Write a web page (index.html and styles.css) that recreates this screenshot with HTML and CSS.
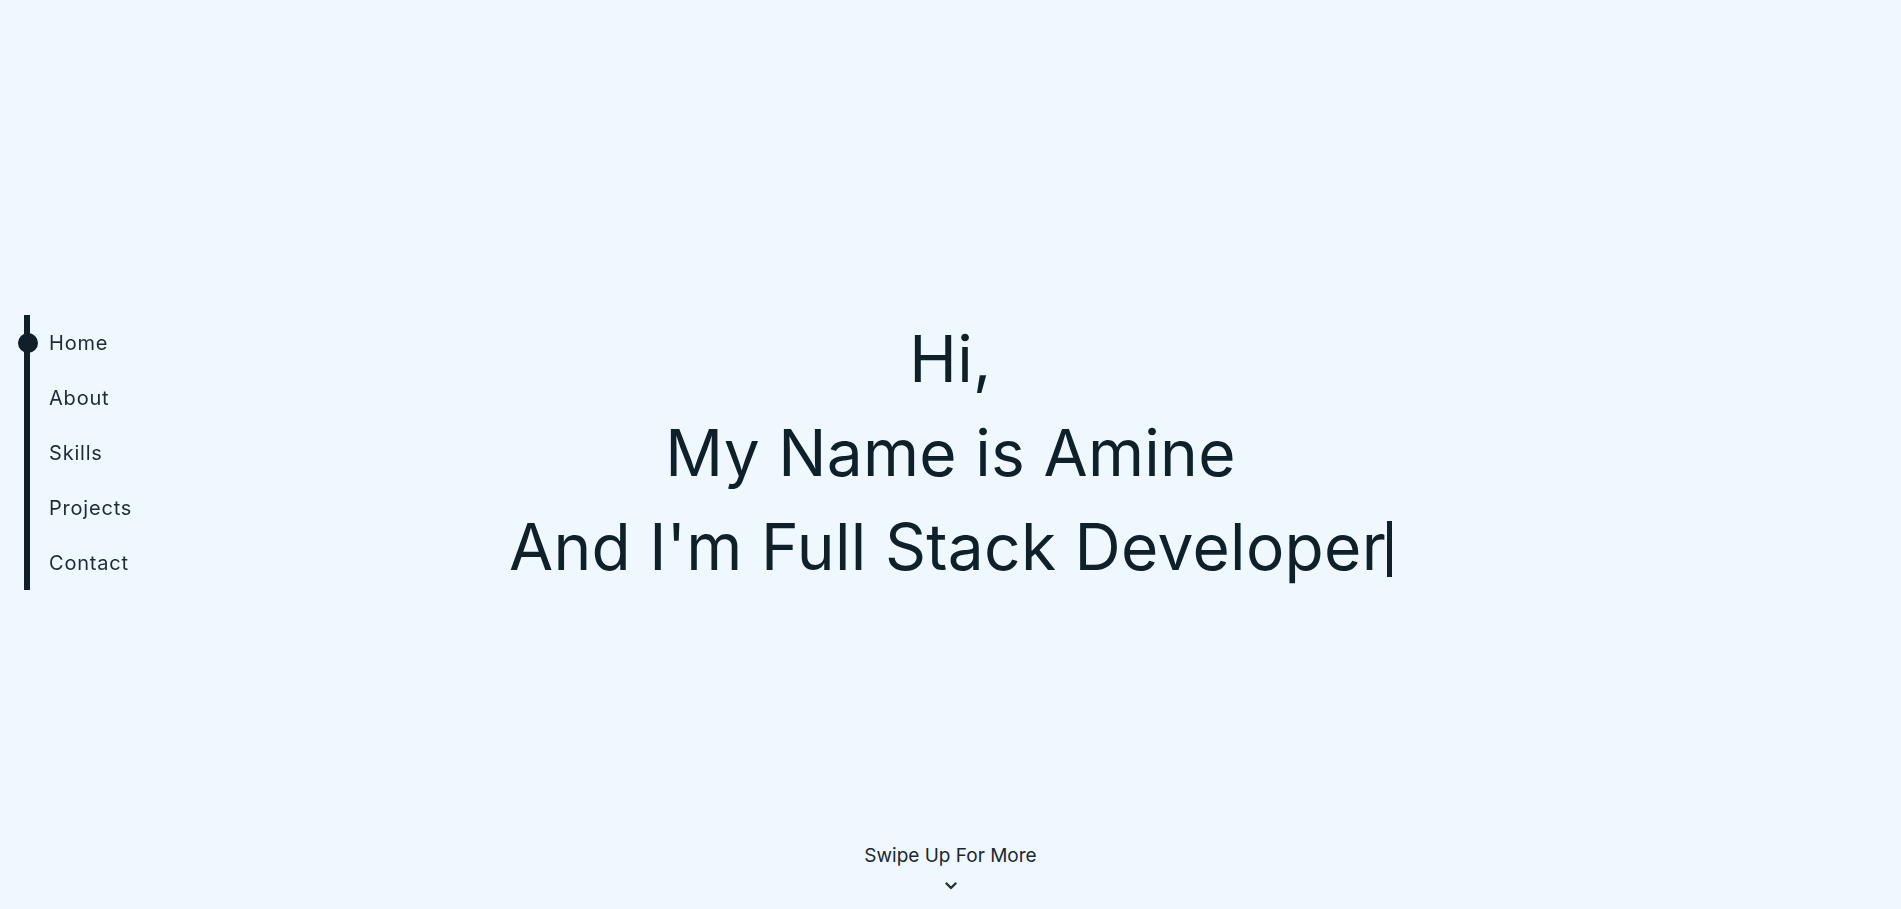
FILE: index.html
```html
<!DOCTYPE html>
<html lang="en">
<head>
<meta charset="UTF-8">
<title>Amine - Full Stack Developer</title>
<link rel="stylesheet" href="styles.css">
</head>
<body>
<nav class="side-nav">
  <ul class="nav-list">
    <li class="nav-item active"><span class="dot"></span><a href="#home">Home</a></li>
    <li class="nav-item"><a href="#about">About</a></li>
    <li class="nav-item"><a href="#skills">Skills</a></li>
    <li class="nav-item"><a href="#projects">Projects</a></li>
    <li class="nav-item"><a href="#contact">Contact</a></li>
  </ul>
</nav>
<main>
  <section class="hero" id="home">
    <div class="hero-body">
      <h1 class="hero-title">
        <span class="line">Hi,</span>
        <span class="line">My Name is Amine</span>
        <span class="line">And I'm Full Stack Developer<span class="cursor"></span></span>
      </h1>
    </div>
    <div class="swipe">
      <span class="swipe-text">Swipe Up For More</span>
      <svg class="chevron" width="12" height="8" viewBox="0 0 12 8"><path d="M1.5 1.5 L6 6 L10.5 1.5" fill="none" stroke="currentColor" stroke-width="2.4" stroke-linecap="round" stroke-linejoin="round"/></svg>
    </div>
  </section>
  <section class="page" id="about"></section>
  <section class="page" id="skills"></section>
  <section class="page" id="projects"></section>
  <section class="page tall" id="contact"></section>
</main>
</body>
</html>
```
FILE: styles.css
```css
html {
  background: #eff7ff;
}
html::-webkit-scrollbar {
  width: 4px;
  background: #f1f1f1;
}
html::-webkit-scrollbar-track {
  background: #f1f1f1;
}
html::-webkit-scrollbar-thumb {
  background: #b9b9b9;
  border-left: 2px solid #f1f1f1;
}
html::-webkit-scrollbar-button:single-button {
  display: block;
  height: 17px;
  background: #f1f1f1;
}
body {
  margin: 0;
  font-family: "Inter", "Liberation Sans", sans-serif;
  color: #10202a;
  background: #eff7ff;
}
.side-nav {
  position: fixed;
  left: 24px;
  top: -2px;
  height: 100vh;
  display: flex;
  align-items: center;
  z-index: 5;
}
.nav-list {
  list-style: none;
  margin: 0;
  padding: 0 0 0 19px;
  border-left: 6px solid #10202a;
}
.nav-item {
  position: relative;
  height: 55px;
  display: flex;
  align-items: center;
  font-size: 20px;
  letter-spacing: 0.8px;
}
.nav-item a {
  color: #1d2b33;
  text-decoration: none;
}
.dot {
  position: absolute;
  left: -31px;
  top: 50%;
  width: 20px;
  height: 20px;
  margin-top: -10px;
  border-radius: 50%;
  background: #10202a;
}
.hero {
  height: 100vh;
  display: flex;
  flex-direction: column;
  align-items: center;
}
.hero-body {
  flex: 1;
  display: flex;
  align-items: center;
  justify-content: center;
  padding-top: 62px;
}
.hero-title {
  margin: 0;
  font-size: 64px;
  font-weight: 400;
  line-height: 94px;
  letter-spacing: 0.3px;
  text-align: center;
  display: flex;
  flex-direction: column;
  align-items: center;
}
.line {
  display: block;
  white-space: nowrap;
}
.cursor {
  display: inline-block;
  width: 5px;
  height: 56px;
  margin-left: 1px;
  background: #10202a;
  vertical-align: -7px;
}
.swipe {
  display: flex;
  flex-direction: column;
  align-items: center;
  gap: 15px;
  padding-bottom: 19px;
}
.swipe-text {
  font-size: 19px;
  color: #1a2830;
}
.chevron {
  color: #23313a;
}
.page {
  height: 100vh;
}
.page.tall {
  height: 200vh;
}
```
